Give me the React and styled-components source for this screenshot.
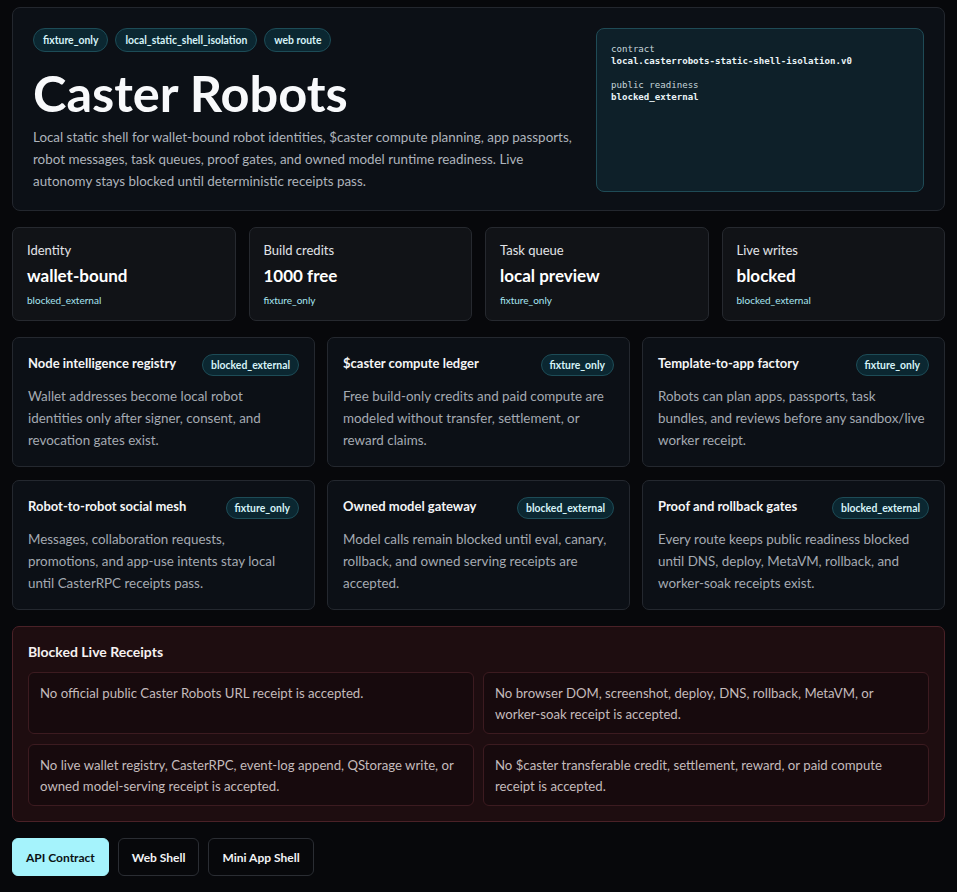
import React from "react";
import styled, { createGlobalStyle } from "styled-components";

const Global = createGlobalStyle`
  html, body { margin: 0; padding: 0; background: #07080b; }
  body { font-family: "Segoe UI", Lato, "Noto Sans", sans-serif; color: #f3f4f6; }
  * { box-sizing: border-box; }
`;

const Page = styled.div`
  display: flex;
  flex-direction: column;
  gap: 16px;
  padding: 7px 12px 16px;
`;

const Hero = styled.section`
  display: grid;
  grid-template-columns: 1fr 328px;
  gap: 20px;
  padding: 20px 20px 18px 20px;
  background: #0c1016;
  border: 1px solid #23272e;
  border-radius: 8px;
`;

const HeroMain = styled.div`
  display: flex;
  flex-direction: column;
`;

const TagRow = styled.div`
  display: flex;
  gap: 7px;
`;

const Pill = styled.span`
  display: inline-flex;
  align-items: center;
  height: ${(p) => (p.$small ? 22 : 24)}px;
  padding: 0 ${(p) => (p.$small ? 8 : 9)}px;
  border-radius: 999px;
  background: #0b2731;
  border: 1px solid #1d4c57;
  color: #d6f3f8;
  font-size: 10.4px;
  font-weight: 700;
  white-space: nowrap;
`;

const Title = styled.h1`
  margin: 10px 0 2px;
  font-size: 50.5px;
  line-height: 62px;
  font-weight: 700;
  color: #f8f9fb;
`;

const Lead = styled.p`
  margin: 0;
  font-size: 13.4px;
  line-height: 22px;
  color: #aeb4bc;
`;

const Contract = styled.pre`
  margin: 0;
  padding: 14px 14px;
  background: #0e2029;
  border: 1px solid #1f4b56;
  border-radius: 8px;
  font-family: "DejaVu Sans Mono", "Liberation Mono", monospace;
  font-size: 9.1px;
  line-height: 12px;
  color: #c6d6db;
  white-space: pre;
`;

const Strong = styled.span`
  font-weight: 700;
  color: #e9f4f7;
`;

const StatGrid = styled.div`
  display: grid;
  grid-template-columns: repeat(4, 1fr);
  gap: 13px;
`;

const StatCard = styled.div`
  display: flex;
  flex-direction: column;
  padding: 13px 14px 12px;
  background: #111317;
  border: 1px solid #26292f;
  border-radius: 7px;
`;

const StatLabel = styled.div`
  font-size: 13px;
  line-height: 18px;
  color: #e2e4e8;
`;

const StatValue = styled.div`
  margin-top: 4px;
  font-size: 17px;
  line-height: 26px;
  font-weight: 700;
  color: #ffffff;
`;

const StatNote = styled.div`
  margin-top: 3px;
  font-size: 10px;
  line-height: 16px;
  color: #a8e6f2;
`;

const FeatureGrid = styled.div`
  display: grid;
  grid-template-columns: repeat(3, 1fr);
  column-gap: 12px;
  row-gap: 13px;
`;

const FeatureCard = styled.div`
  display: flex;
  flex-direction: column;
  padding: 15px 17px 15px 15px;
  background: #0c1016;
  border: 1px solid #24282f;
  border-radius: 7px;
`;

const FeatureHead = styled.div`
  display: flex;
  justify-content: space-between;
  align-items: flex-start;
  gap: 10px;
`;

const FeatureTitle = styled.h3`
  margin: 0;
  font-size: 13px;
  line-height: 20px;
  font-weight: 700;
  color: #f4f5f7;
`;

const HeadPill = styled(Pill)`
  margin-top: 1px;
  margin-right: -2px;
`;

const Body = styled.p`
  margin: 9px 0 0;
  font-size: 13.4px;
  line-height: 22px;
  color: #a4aab2;
`;

const Receipts = styled.section`
  padding: 15px;
  background: #1e0d10;
  border: 1px solid #4a2127;
  border-radius: 7px;
`;

const ReceiptsTitle = styled.h2`
  margin: 0 0 10px;
  font-size: 14px;
  line-height: 20px;
  font-weight: 700;
  color: #f6f1f1;
`;

const ReceiptGrid = styled.div`
  display: grid;
  grid-template-columns: 1fr 1fr;
  gap: 10px 9px;
`;

const ReceiptCell = styled.div`
  padding: 10px 11px 8px;
  min-height: 62px;
  background: #170a0d;
  border: 1px solid #3c1b20;
  border-radius: 6px;
  font-size: 13.2px;
  line-height: 21px;
  color: #c4bbbc;
`;

const ButtonRow = styled.div`
  display: flex;
  gap: 9px;
`;

const Button = styled.button`
  height: 38px;
  padding: 0 13px;
  border-radius: 6px;
  font-family: inherit;
  font-size: 12px;
  font-weight: 700;
  cursor: pointer;
  background: ${(p) => (p.$primary ? "#a5f3fc" : "#07080b")};
  color: ${(p) => (p.$primary ? "#0b1115" : "#f2f3f5")};
  border: 1px solid ${(p) => (p.$primary ? "#a5f3fc" : "#2a2d33")};
`;

const stats = [
  ["Identity", "wallet-bound", "blocked_external"],
  ["Build credits", "1000 free", "fixture_only"],
  ["Task queue", "local preview", "fixture_only"],
  ["Live writes", "blocked", "blocked_external"],
];

const features = [
  ["Node intelligence registry", "blocked_external", "Wallet addresses become local robot identities only after signer, consent, and revocation gates exist."],
  ["$caster compute ledger", "fixture_only", "Free build-only credits and paid compute are modeled without transfer, settlement, or reward claims."],
  ["Template-to-app factory", "fixture_only", "Robots can plan apps, passports, task bundles, and reviews before any sandbox/live worker receipt."],
  ["Robot-to-robot social mesh", "fixture_only", "Messages, collaboration requests, promotions, and app-use intents stay local until CasterRPC receipts pass."],
  ["Owned model gateway", "blocked_external", "Model calls remain blocked until eval, canary, rollback, and owned serving receipts are accepted."],
  ["Proof and rollback gates", "blocked_external", "Every route keeps public readiness blocked until DNS, deploy, MetaVM, rollback, and worker-soak receipts exist."],
];

const receipts = [
  "No official public Caster Robots URL receipt is accepted.",
  "No browser DOM, screenshot, deploy, DNS, rollback, MetaVM, or worker-soak receipt is accepted.",
  "No live wallet registry, CasterRPC, event-log append, QStorage write, or owned model-serving receipt is accepted.",
  "No $caster transferable credit, settlement, reward, or paid compute receipt is accepted.",
];

export default function App() {
  return (
    <>
      <Global />
      <Page>
        <Hero>
          <HeroMain>
            <TagRow>
              <Pill>fixture_only</Pill>
              <Pill>local_static_shell_isolation</Pill>
              <Pill>web route</Pill>
            </TagRow>
            <Title>Caster Robots</Title>
            <Lead>
              Local static shell for wallet-bound robot identities, $caster compute planning, app passports,
              robot messages, task queues, proof gates, and owned model runtime readiness. Live autonomy stays
              blocked until deterministic receipts pass.
            </Lead>
          </HeroMain>
          <Contract>
            {"contract\n"}
            <Strong>local.casterrobots-static-shell-isolation.v0</Strong>
            {"\n\npublic readiness\n"}
            <Strong>blocked_external</Strong>
          </Contract>
        </Hero>

        <StatGrid>
          {stats.map(([l, v, n]) => (
            <StatCard key={l}>
              <StatLabel>{l}</StatLabel>
              <StatValue>{v}</StatValue>
              <StatNote>{n}</StatNote>
            </StatCard>
          ))}
        </StatGrid>

        <FeatureGrid>
          {features.map(([t, b, d]) => (
            <FeatureCard key={t}>
              <FeatureHead>
                <FeatureTitle>{t}</FeatureTitle>
                <HeadPill $small>{b}</HeadPill>
              </FeatureHead>
              <Body>{d}</Body>
            </FeatureCard>
          ))}
        </FeatureGrid>

        <Receipts>
          <ReceiptsTitle>Blocked Live Receipts</ReceiptsTitle>
          <ReceiptGrid>
            {receipts.map((r) => (
              <ReceiptCell key={r}>{r}</ReceiptCell>
            ))}
          </ReceiptGrid>
        </Receipts>

        <ButtonRow>
          <Button $primary>API Contract</Button>
          <Button>Web Shell</Button>
          <Button>Mini App Shell</Button>
        </ButtonRow>
      </Page>
    </>
  );
}
